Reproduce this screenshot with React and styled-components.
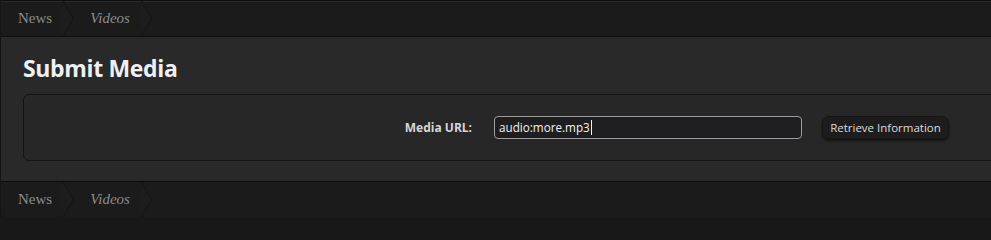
import React from "react";
import styled, { createGlobalStyle } from "styled-components";

const Global = createGlobalStyle`
  html, body { margin: 0; padding: 0; background: #181818; overflow: hidden; }
  body { font-family: "Open Sans", "Liberation Sans", sans-serif; }
`;

const Page = styled.div`
  width: 1030px;
  border-left: 1px solid #141414;
  display: flex;
  flex-direction: column;
`;

const Bar = styled.nav`
  display: flex;
  align-items: stretch;
  height: 35px;
  padding-left: 1px;
  background: #1b1b1b;
  ${(p) =>
    p.$top
      ? `border-top: 1px solid #0e0e0e; box-shadow: inset 0 1px 0 #2c2c2c; border-bottom: 1px solid #0f0f0f;`
      : `border-top: 1px solid #0e0e0e; border-bottom-left-radius: 5px;`}
`;

const Crumb = styled.a`
  display: flex;
  align-items: center;
  padding: 0 11px 0 16px;
  font-family: "Liberation Serif", "DejaVu Serif", serif;
  font-size: 15px;
  color: #8c8c8c;
  font-style: ${(p) => (p.$italic ? "italic" : "normal")};
  text-decoration: none;
`;

const ArrowSvg = styled.svg`
  display: block;
  flex: none;
`;

const Arrow = () => (
  <ArrowSvg width="11" height="35" viewBox="0 0 11 35">
    <polygon points="0,0 10,17.5 0,35" fill="#1d1d1d" />
    <polyline points="0.5,0 10,17.5 0.5,35" fill="none" stroke="#0f0f0f" strokeWidth="1.1" />
    <polyline points="1.5,1 9.6,17.5 1.5,34" fill="none" stroke="#242424" strokeWidth="0.6" />
  </ArrowSvg>
);

const Content = styled.main`
  background: #292929;
  padding: 20px 22px 20px 22px;
  display: flex;
  flex-direction: column;
`;

const Title = styled.h1`
  margin: 0 0 15px 0;
  font-family: "Open Sans", sans-serif;
  font-weight: 700;
  font-size: 23px;
  line-height: 22px;
  letter-spacing: -0.35px;
  color: #eef0f4;
`;

const FormBox = styled.form`
  border: 1px solid #141414;
  border-radius: 6px;
  background: #272727;
  height: 65px;
  display: grid;
  grid-template-columns: 448px 308px auto;
  column-gap: 22px;
  align-items: center;
`;

const Label = styled.label`
  text-align: right;
  font-size: 12px;
  font-weight: 700;
  color: #d6d6d6;
`;

const Field = styled.div`
  box-sizing: border-box;
  height: 23px;
  margin-top: -1px;
  border: 1px solid #9c9c9c;
  border-radius: 4px;
  background: #1e1e21;
  padding: 0 4px;
  display: flex;
  align-items: center;
  font-size: 11.7px;
  color: #f2f2f2;
`;

const Caret = styled.span`
  display: inline-block;
  width: 1px;
  height: 15px;
  margin-left: 1px;
  background: #f2f2f2;
`;

const Button = styled.button`
  justify-self: start;
  margin-left: -2px;
  height: 23px;
  width: 127px;
  padding: 0;
  border: 1px solid #161616;
  border-radius: 7px;
  background: #1d1d1d;
  box-shadow: 0 2px 3px rgba(0, 0, 0, 0.55);
  font-family: "Open Sans", sans-serif;
  font-size: 11.5px;
  color: #dcdcdc;
  cursor: pointer;
`;

const Breadcrumbs = ({ top }) => (
  <Bar $top={top}>
    <Crumb href="#">News</Crumb>
    <Arrow />
    <Crumb href="#" $italic>Videos</Crumb>
    <Arrow />
  </Bar>
);

export default function App() {
  return (
    <>
      <Global />
      <Page>
        <Breadcrumbs top />
        <Content>
          <Title>Submit Media</Title>
          <FormBox onSubmit={(e) => e.preventDefault()}>
            <Label>Media URL:</Label>
            <Field role="textbox">
              audio:more.mp3
              <Caret />
            </Field>
            <Button type="button">Retrieve Information</Button>
          </FormBox>
        </Content>
        <Breadcrumbs />
      </Page>
    </>
  );
}
